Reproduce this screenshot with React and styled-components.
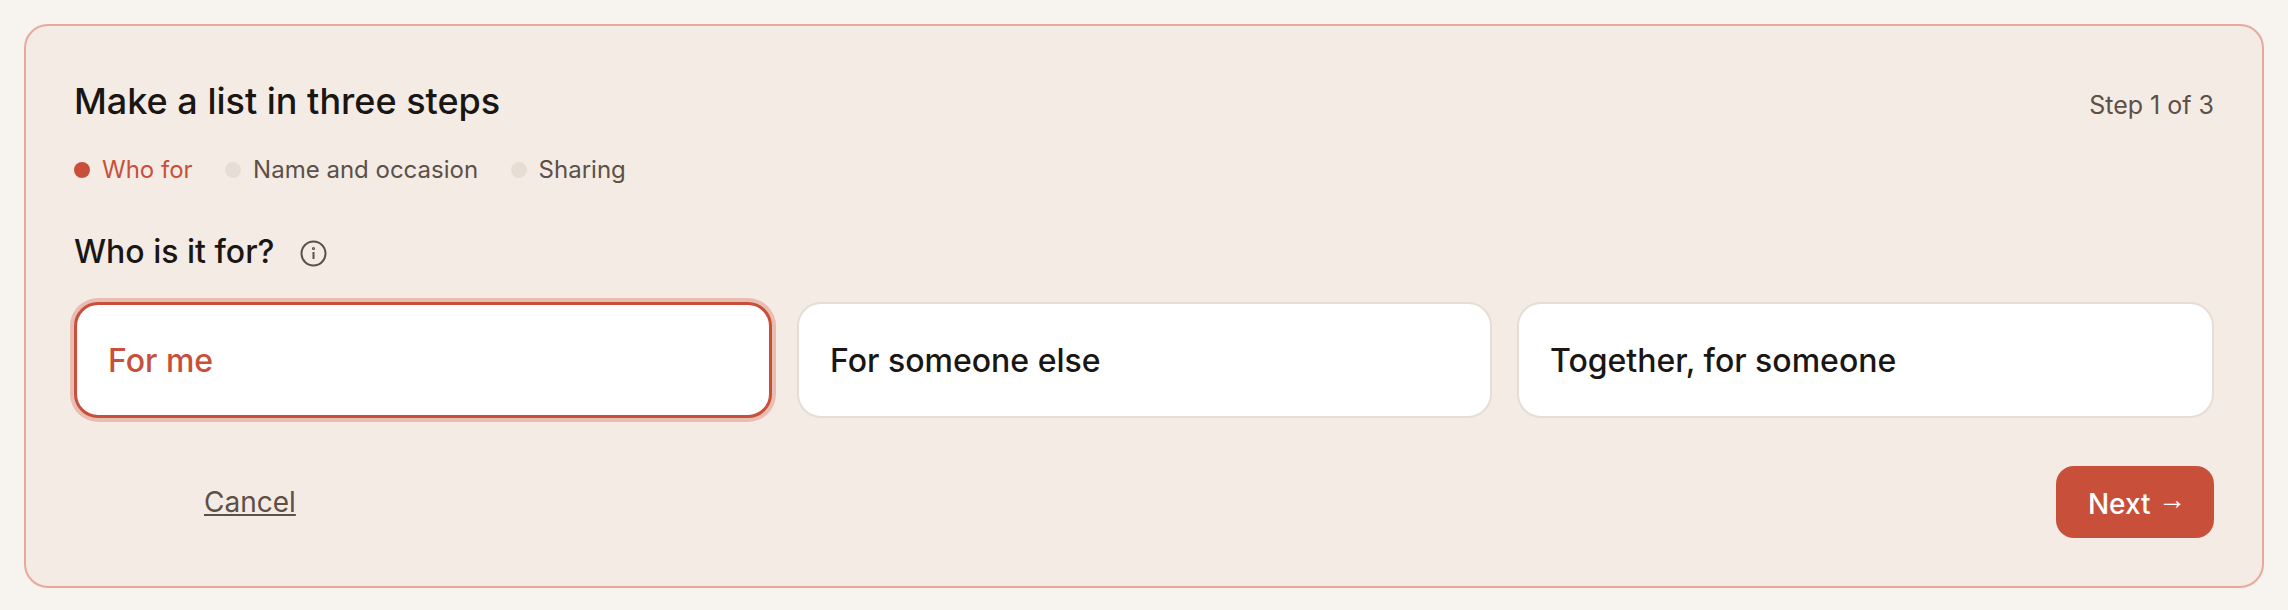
import React from "react";
import styled, { createGlobalStyle } from "styled-components";

const GlobalStyle = createGlobalStyle`
  html, body {
    margin: 0;
    background: #f7f3ee;
    font-family: Inter, "Liberation Sans", sans-serif;
  }
`

const Page = styled.div`
  padding: 24px;
`

const Card = styled.section`
  box-sizing: border-box;
  height: 564px;
  padding: 48px;
  background: #f4ebe5;
  border: 2px solid #e6a99c;
  border-radius: 24px;
  display: flex;
  flex-direction: column;
`

const Header = styled.div`
  box-sizing: border-box;
  display: flex;
  justify-content: space-between;
  align-items: baseline;
  height: 56px;
  padding-top: 5px;
`

const Title = styled.h2`
  margin: 0;
  font-size: 36px;
  font-weight: 500;
  color: #1a1613;
`

const StepCount = styled.span`
  font-size: 25px;
  color: #5c5048;
`

const Steps = styled.ol`
  list-style: none;
  margin: 25px 0 0;
  padding: 0;
  display: flex;
  gap: 32.5px;
`

const Step = styled.li`
  display: flex;
  align-items: center;
  gap: 12px;
  font-size: 24px;
  color: ${p => (p.$active ? "#c8503a" : "#5c5048")};
  &::before {
    content: '';
    width: 16px;
    height: 16px;
    border-radius: 50%;
    background: ${p => (p.$active ? "#c8503a" : "#e6ded5")};
  }
`

const Question = styled.div`
  display: flex;
  align-items: center;
  gap: 26px;
  margin-top: 48px;
  font-size: 32px;
  font-weight: 500;
  color: #1a1613;
  svg {
    margin-top: 3px;
  }
`

const Options = styled.div`
  display: grid;
  grid-template-columns: 698fr 695fr 697fr;
  gap: 25px;
  margin-top: 31px;
`

const Option = styled.button`
  box-sizing: border-box;
  height: 116px;
  padding: 0 31px;
  text-align: left;
  background: #fff;
  font-family: inherit;
  font-size: 32px;
  font-weight: 500;
  border-radius: 24px;
  border: ${p => (p.$selected ? "3px solid #c8503a" : "2px solid #e6ded5")};
  box-shadow: ${p => (p.$selected ? "0 0 0 4px #eabdb2" : "none")};
  color: ${p => (p.$selected ? "#c8503a" : "#1a1613")};
`

const Footer = styled.div`
  display: flex;
  justify-content: space-between;
  align-items: center;
  margin-top: 48px;
`

const Cancel = styled.a`
  margin-left: 130px;
  font-size: 28px;
  color: #5c5048;
  text-decoration: underline;
`

const Next = styled.button`
  width: 158px;
  height: 72px;
  padding: 0 0 0 4px;
  border: 0;
  border-radius: 18px;
  background: #c8503a;
  color: #fff;
  font-family: inherit;
  font-size: 28px;
  font-weight: 500;
`

const Arrow = styled.span`
  font-family: "Liberation Sans", sans-serif;
  font-weight: 400;
  vertical-align: 5px;
`

const InfoIcon = () => (
  <svg width="27" height="27" viewBox="0 0 27 27" fill="none" stroke="#5c5048" strokeWidth="2">
    <circle cx="13.5" cy="13.5" r="12" />
    <path d="M13.5 12v7" />
    <circle cx="13.5" cy="8.5" r="0.6" />
  </svg>
)

export default function App() {
  return (
    <Page>
      <GlobalStyle />
      <Card>
        <Header>
          <Title>Make a list in three steps</Title>
          <StepCount>Step 1 of 3</StepCount>
        </Header>
        <Steps>
          <Step $active>Who for</Step>
          <Step>Name and occasion</Step>
          <Step>Sharing</Step>
        </Steps>
        <Question>
          Who is it for?
          <InfoIcon />
        </Question>
        <Options>
          <Option $selected>For me</Option>
          <Option>For someone else</Option>
          <Option>Together, for someone</Option>
        </Options>
        <Footer>
          <Cancel href="#">Cancel</Cancel>
          <Next>Next <Arrow>→</Arrow></Next>
        </Footer>
      </Card>
    </Page>
  )
}
